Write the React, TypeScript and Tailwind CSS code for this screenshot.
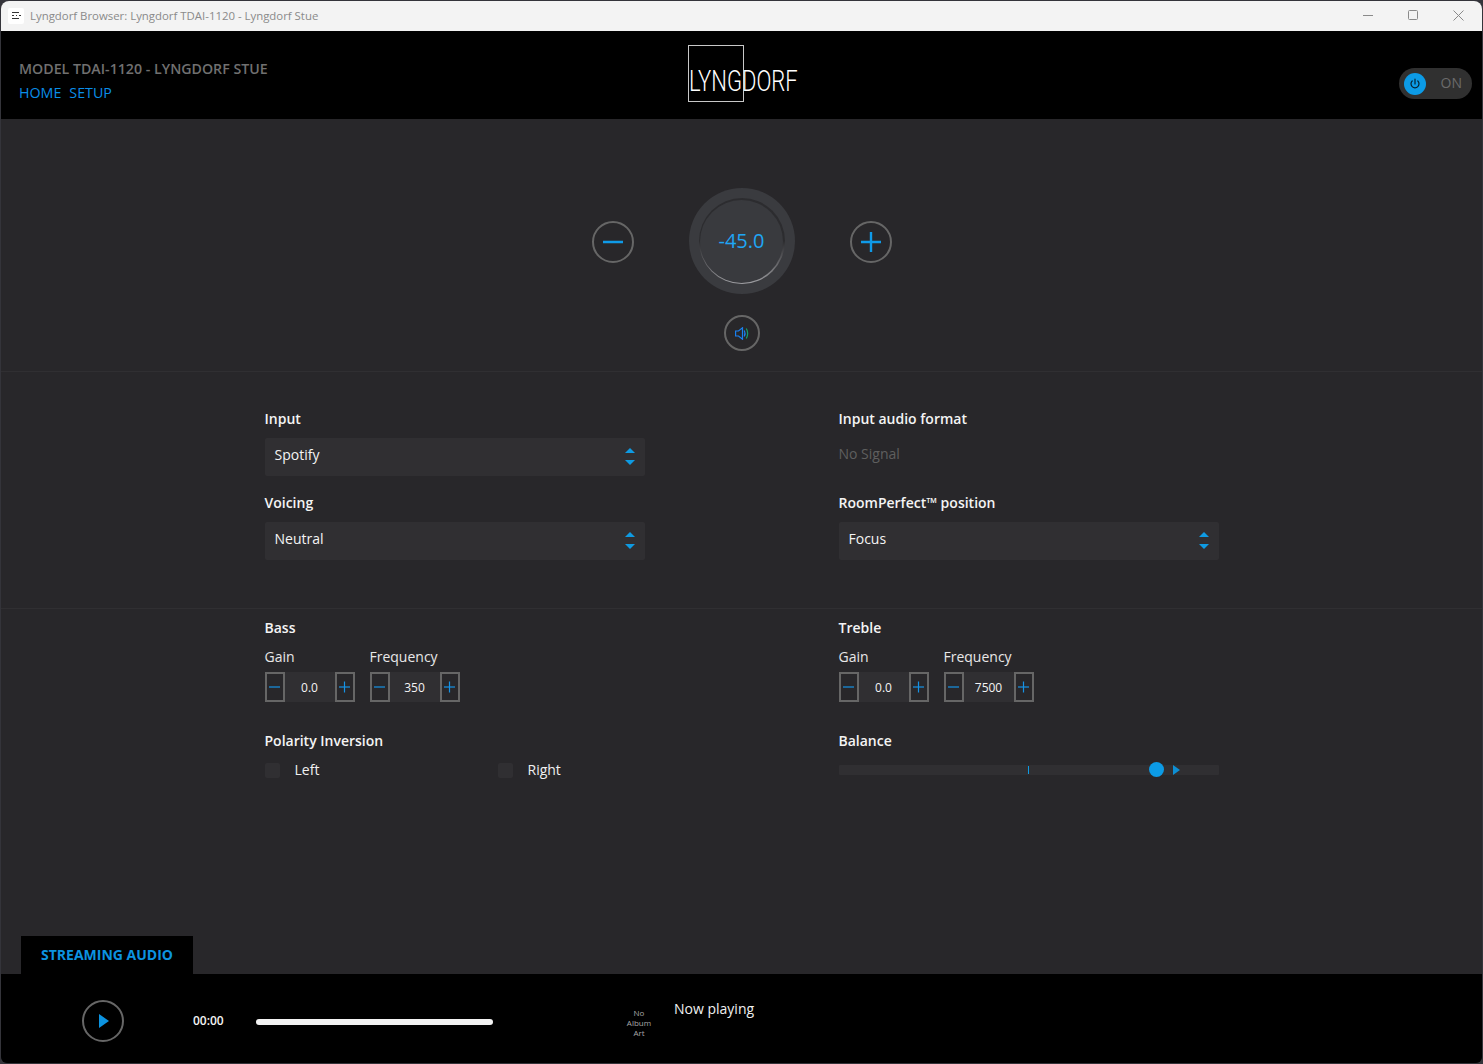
import React from "react";

const font = { fontFamily: '"Open Sans", "Noto Sans", sans-serif' };

function Arrows() {
  return (
    <svg width="10" height="18" viewBox="0 0 10 18" className="fill-[#0e9be3]">
      <path d="M5 0 L10 5 H0 Z" />
      <path d="M0 12 H10 L5 17 Z" />
    </svg>
  );
}

function Select({ value }: { value: string }) {
  return (
    <div className="flex h-[38px] items-center justify-between rounded-[2px] bg-[#302f32] pl-[10px] pr-[10px] text-[14px] text-[#f4f4f4]">
      <span className="pb-[5px]">{value}</span>
      <Arrows />
    </div>
  );
}

function Label({ children }: { children: React.ReactNode }) {
  return <div className="h-5 text-[14px] font-semibold leading-5 text-[#f4f4f4]">{children}</div>;
}

function StepButton({ plus }: { plus?: boolean }) {
  return (
    <div className="flex h-[30px] w-5 items-center justify-center border-2 border-[#666666]">
      <svg width="11" height="12" viewBox="0 0 11 12" className="mr-px stroke-[#1593e6]" strokeWidth="1.2">
        <path d="M0 6 H11" />
        {plus && <path d="M5.5 0.5 V11.5" />}
      </svg>
    </div>
  );
}

function Spinner({ label, value }: { label: string; value: string }) {
  return (
    <div>
      <div className="h-5 text-[14px] leading-5 text-[#e8e8e8]">{label}</div>
      <div className="mt-[5px] flex">
        <StepButton />
        <div className="flex h-[30px] w-[50px] items-center justify-center bg-[#302f32] pt-[2px] text-[12px] text-[#f4f4f4]">
          {value}
        </div>
        <StepButton plus />
      </div>
    </div>
  );
}

function ToneGroup({ title, freq }: { title: string; freq: string }) {
  return (
    <div>
      <Label>{title}</Label>
      <div className="mt-[9px] flex gap-[15px]">
        <Spinner label="Gain" value="0.0" />
        <Spinner label="Frequency" value={freq} />
      </div>
    </div>
  );
}

function Check({ label }: { label: string }) {
  return (
    <div className="flex h-5 items-center gap-[15px] text-[14px] text-[#f0f0f0]">
      <div className="h-[15px] w-[15px] rounded-[2px] bg-[#302f32]" />
      <span className="pb-[2px]">{label}</span>
    </div>
  );
}

function RoundButton({ children }: { children: React.ReactNode }) {
  return (
    <div className="mt-[2px] flex h-[42px] w-[42px] items-center justify-center rounded-full border-2 border-[#666666]">
      {children}
    </div>
  );
}

export default function App() {
  return (
    <div className="h-[1064px] w-[1483px] overflow-hidden bg-[#34343a] p-px" style={font}>
      <div className="flex h-[1062px] flex-col overflow-hidden rounded-t-[8px] rounded-b-[6px] bg-[#28272a]">
        {/* Title bar */}
        <div className="flex h-[30px] shrink-0 items-center bg-[#f3f3f3] pl-[7px] text-[11.4px] text-[#8a8a8a]">
          <div className="flex h-4 w-4 items-center justify-center rounded-[2px] bg-white">
            <svg width="11" height="8" viewBox="0 0 11 8" className="stroke-[#333333]" strokeWidth="1">
              <path d="M1 0.5 H8 M1 3.5 H3 M5 3.5 H6 M8 3.5 H10 M1 6.5 H8" />
            </svg>
          </div>
          <span className="ml-[6px]">Lyngdorf Browser: Lyngdorf TDAI-1120 - Lyngdorf Stue</span>
          <div className="mb-[2px] ml-auto flex items-center gap-[35px] pr-[18px]">
            <svg width="10" height="10" viewBox="0 0 10 10" className="stroke-[#8a8a8a]"><path d="M0 5.5 H10" /></svg>
            <svg width="10" height="10" viewBox="0 0 10 10" fill="none" className="stroke-[#8a8a8a]"><rect x="0.5" y="0.5" width="9" height="9" rx="1" /></svg>
            <svg width="11" height="11" viewBox="0 0 11 11" className="stroke-[#8a8a8a]"><path d="M0.5 0.5 L10.5 10.5 M10.5 0.5 L0.5 10.5" /></svg>
          </div>
        </div>

        {/* Header */}
        <div className="grid h-[88px] shrink-0 grid-cols-3 items-start bg-black pl-[18px] pr-[10px]">
          <div className="pt-[28px]">
            <div className="h-5 whitespace-nowrap text-[14.2px] font-semibold leading-5 text-[#707070]">
              MODEL TDAI-1120 - LYNGDORF STUE
            </div>
            <div className="mt-[4px] flex gap-[8px] text-[14.25px] leading-5 text-[#0a8ee8]">
              <span>HOME</span>
              <span>SETUP</span>
            </div>
          </div>
          <div className="flex justify-center pr-[7px] pt-[14px]">
            <div className="relative h-[57px] w-[108px]">
              <div className="h-[57px] w-[56px] border border-[#c8c8c8]" />
              <div
                className="absolute left-[1px] top-[20px] origin-left scale-x-[0.76] whitespace-nowrap text-[29px] font-light leading-[32px] text-white"
                style={{ fontFamily: '"Roboto", sans-serif' }}
              >
                LYNGDORF
              </div>
            </div>
          </div>
          <div className="flex justify-end pt-[37px]">
            <div className="flex h-[31px] w-[73px] items-center justify-between rounded-full bg-[#303030] pl-[5px] pr-[10px]">
              <div className="flex h-[22px] w-[22px] items-center justify-center rounded-full bg-[#0c9be6]">
                <svg width="12" height="12" viewBox="0 0 12 12" fill="none" className="stroke-[#07222f]" strokeWidth="1.2" strokeLinecap="round">
                  <path d="M6 1 V6" />
                  <path d="M3.2 3 A4 4 0 1 0 8.8 3" />
                </svg>
              </div>
              <span className="pb-[2px] text-[14px] text-[#6b6b6b]">ON</span>
            </div>
          </div>
        </div>

        {/* Volume */}
        <div className="flex h-[253px] shrink-0 flex-col items-center border-b border-[#302f32] pt-[69px]">
          <div className="flex items-center gap-[55px]">
            <RoundButton>
              <svg width="20" height="20" viewBox="0 0 20 20" className="stroke-[#0f9ae8]" strokeWidth="2.4"><path d="M0 10 H20" /></svg>
            </RoundButton>
            <div className="flex h-[106px] w-[106px] items-center justify-center rounded-full bg-[#3a3b3f]">
              <div className="flex h-[86px] w-[86px] items-center justify-center rounded-full bg-gradient-to-t from-[#a0a0a4] via-[#2c2c2f] to-[#2c2c2f] p-[1.5px]">
                <div className="flex h-full w-full items-center justify-center rounded-full bg-[#393a3e] text-[20px] font-normal text-[#1fa6f5]">
                  -45.0
                </div>
              </div>
            </div>
            <RoundButton>
              <svg width="20" height="20" viewBox="0 0 20 20" className="stroke-[#0f9ae8]" strokeWidth="2.4"><path d="M0 10 H20 M10 0 V20" /></svg>
            </RoundButton>
          </div>
          <div className="mt-[21px] flex h-9 w-9 items-center justify-center rounded-full border-2 border-[#666666]">
            <svg width="14" height="13" viewBox="0 0 14 13" fill="none" className="stroke-[#1a80f0]" strokeWidth="1.2">
              <path d="M0.6 4 H3.5 L7.5 0.8 V12.2 L3.5 9 H0.6 Z" />
              <path d="M9.3 3.5 Q10.8 6.5 9.3 9.5" />
              <path d="M11.3 1.5 Q14 6.5 11.3 11.5" className="stroke-[#15a06a]" />
            </svg>
          </div>
        </div>

        {/* Selects */}
        <div className="shrink-0 border-b border-[#302f32] pb-[48px] pt-[37px]">
          <div className="mx-auto grid w-[954px] grid-cols-[380px_380px] justify-between">
            <div>
              <Label>Input</Label>
              <div className="mt-[9px]"><Select value="Spotify" /></div>
            </div>
            <div>
              <Label>Input audio format</Label>
              <div className="mt-[9px] flex h-[38px] items-center pb-[8px] text-[14px] text-[#5f5f5f]">No Signal</div>
            </div>
            <div className="mt-[17px]">
              <Label>Voicing</Label>
              <div className="mt-[9px]"><Select value="Neutral" /></div>
            </div>
            <div className="mt-[17px]">
              <Label>RoomPerfect™ position</Label>
              <div className="mt-[9px]"><Select value="Focus" /></div>
            </div>
          </div>
        </div>

        {/* Tone */}
        <div className="min-h-0 flex-1 pt-[9px]">
          <div className="mx-auto grid w-[954px] grid-cols-[380px_380px] justify-between">
            <ToneGroup title="Bass" freq="350" />
            <ToneGroup title="Treble" freq="7500" />
            <div className="mt-[29px]">
              <Label>Polarity Inversion</Label>
              <div className="mt-[9px] grid grid-cols-[233px_1fr]">
                <Check label="Left" />
                <Check label="Right" />
              </div>
            </div>
            <div className="mt-[29px]">
              <Label>Balance</Label>
              <div className="relative mt-[14px] h-[10px] rounded-[1px] bg-[#302f32]">
                <div className="absolute left-[189px] top-[1px] h-2 w-px bg-[#0e9be3]" />
                <div className="absolute left-[310px] top-[-3px] h-[15px] w-[15px] rounded-full bg-[#0c9be6]" />
                <svg width="7" height="10" viewBox="0 0 7 10" className="absolute left-[334px] top-0 fill-[#0e8fd4]">
                  <path d="M0 0 L7 5 L0 10 Z" />
                </svg>
              </div>
            </div>
          </div>
        </div>

        {/* Tab */}
        <div className="flex shrink-0 pl-5">
          <div className="flex h-[38px] w-[172px] items-center justify-center bg-black pb-[2px] text-[14px] font-bold text-[#0c93e0]">
            STREAMING AUDIO
          </div>
        </div>

        {/* Player */}
        <div className="flex h-[89px] shrink-0 items-start bg-black pl-[81px]">
          <div className="mt-[26px] flex h-[42px] w-[42px] items-center justify-center rounded-full border-2 border-[#666666]">
            <svg width="10" height="14" viewBox="0 0 10 14" className="ml-[1px] fill-[#0c93e0]"><path d="M0 0 L10 7 L0 14 Z" /></svg>
          </div>
          <div className="ml-[69px] mt-[37px] w-[63px] text-[12px] font-semibold leading-5 text-[#f4f4f4]">00:00</div>
          <div className="mt-[45px] h-[6px] w-[237px] rounded-full bg-[#f2f2f2]" />
          <div className="ml-[133px] mt-[34px] w-[26px] text-center text-[8px] leading-[10px] text-[#a8a8a8]">
            No Album Art
          </div>
          <div className="ml-[22px] mt-[26px] text-[14px] leading-5 text-[#f0f0f0]"><span className="block -translate-y-px">Now playing</span></div>
        </div>
      </div>
    </div>
  );
}
